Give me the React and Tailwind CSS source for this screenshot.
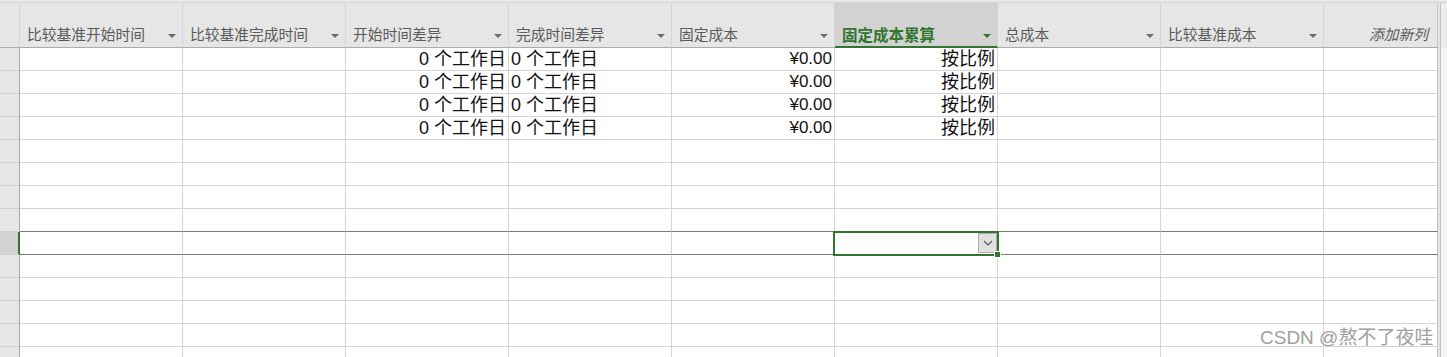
import React from 'react';

const GREEN = '#31752f';

const COLS = [
  { label: '比较基准开始时间' },
  { label: '比较基准完成时间' },
  { label: '开始时间差异' },
  { label: '完成时间差异' },
  { label: '固定成本' },
  { label: '固定成本累算', active: true },
  { label: '总成本' },
  { label: '比较基准成本' },
];

const DATA_ROWS = 4;
const ROW_COUNT = 14;
const SEL_ROW = 8;

function Caret({ green }) {
  return (
    <svg width="8" height="4" viewBox="0 0 8 4" className="mb-[6px] shrink-0">
      <polygon points="0,0 8,0 4,4" fill={green ? GREEN : '#6a6a6a'} />
    </svg>
  );
}

function HeaderRow() {
  return (
    <div className="flex h-[45px]">
      <div className="w-[20px] shrink-0 bg-[#e6e6e6] border-r border-b border-r-[#d4d4d4] border-b-[#ababab]" />
      {COLS.map((c) =>
        c.active ? (
          <div
            key={c.label}
            className="w-[163px] shrink-0 flex items-end justify-between pl-[7px] pr-[6px] pb-[2px] bg-[#d2d2d2] border-r border-r-[#d4d4d4] border-b-2 border-b-[#31752f]"
          >
            <span className="leading-[20px] text-[15.5px] font-bold text-[#31752f]">{c.label}</span>
            <Caret green />
          </div>
        ) : (
          <div
            key={c.label}
            className="w-[163px] shrink-0 flex items-end justify-between pl-[7px] pr-[6px] pb-[3px] bg-[#e6e6e6] border-r border-b border-r-[#d4d4d4] border-b-[#ababab]"
          >
            <span className="leading-[20px] text-[#5a5a5a]">{c.label}</span>
            <Caret />
          </div>
        )
      )}
      <div className="w-[114px] shrink-0 flex items-end justify-end pr-[9px] pb-[3px] bg-[#e6e6e6] border-r border-b border-r-[#c4c4c4] border-b-[#ababab]">
        <span className="leading-[20px] italic text-[#5a5a5a]">添加新列</span>
      </div>
      <div className="w-[3px] shrink-0 bg-[#e4e4e4] border-r border-[#c4c4c4]" />
      <div className="flex-1 bg-[#ececec]" />
    </div>
  );
}

function DropButton() {
  return (
    <div className="absolute right-0 top-[1px] w-[19px] h-[20px] bg-[#e1e1e1] border border-[#adadad] flex items-center justify-center z-20">
      <svg width="10" height="6" viewBox="0 0 10 6">
        <polyline points="1,1 5,5 9,1" fill="none" stroke="#555" strokeWidth="1.1" />
      </svg>
    </div>
  );
}

function BodyRow({ i }) {
  const sel = i === SEL_ROW;
  const dark = i === SEL_ROW || i === SEL_ROW - 1;
  const line = dark ? 'border-b-[#7a7a7a]' : 'border-b-[#d4d4d4]';
  const has = i < DATA_ROWS;
  const cell = `w-[163px] shrink-0 relative whitespace-nowrap border-r border-b border-r-[#d4d4d4] ${line}`;
  return (
    <div className="flex h-[23px] text-[18px] leading-[22px] text-[#111] font-['Liberation_Sans','Noto_Sans_CJK_SC',sans-serif]">
      <div
        className={
          sel
            ? 'w-[20px] shrink-0 bg-[#d2d2d2] border-r-2 border-r-[#31752f] border-b border-b-[#d0d0d0]'
            : 'w-[20px] shrink-0 bg-[#e6e6e6] border-r border-b border-r-[#a6a6a6] border-b-[#d0d0d0]'
        }
      />
      <div className={cell} />
      <div className={cell} />
      <div className={`${cell} text-right pr-[2px]`}>{has && '0 个工作日'}</div>
      <div className={`${cell} pl-[2px]`}>{has && '0 个工作日'}</div>
      <div className={`${cell} text-right pr-[2px] text-[17px]`}>{has && '¥0.00'}</div>
      <div className={`${cell} text-right pr-[2px]`}>
        {has && '按比例'}
        {sel && (
          <>
            <div className="absolute -left-[2px] -top-[1px] w-[166px] h-[25px] border-2 border-[#31752f] z-10" />
            <DropButton />
            <div className="absolute -right-[4px] top-[19px] w-[7px] h-[7px] bg-[#31752f] border border-white z-30" />
          </>
        )}
      </div>
      <div className={cell} />
      <div className={cell} />
      <div className={`w-[114px] shrink-0 border-r border-b border-r-[#c4c4c4] ${line}`} />
      <div className="w-[3px] shrink-0 bg-[#e4e4e4] border-r border-[#c4c4c4]" />
      <div className="flex-1 bg-[#f4f4f4]" />
    </div>
  );
}

export default function App() {
  return (
    <div className="relative w-[1447px] h-[357px] overflow-hidden bg-white font-['Noto_Sans_CJK_SC',sans-serif] text-[14.75px]">
      <div className="h-[3px] bg-[#e8e8e8] border-b border-[#d4d4d4]" />
      <HeaderRow />
      {Array.from({ length: ROW_COUNT }).map((_, i) => (
        <BodyRow key={i} i={i} />
      ))}
      <div className="absolute left-[1260px] top-[326px] text-[19px] leading-[24px] text-[#a0a0a0] whitespace-nowrap font-['Liberation_Sans','Noto_Sans_CJK_SC',sans-serif]">
        CSDN @熬不了夜哇
      </div>
    </div>
  );
}
